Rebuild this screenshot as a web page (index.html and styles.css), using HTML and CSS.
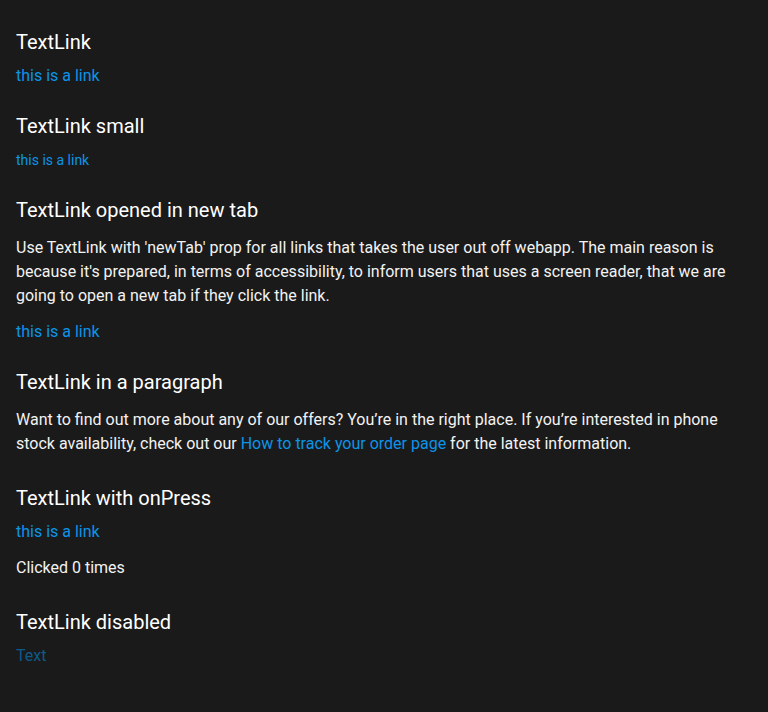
FILE: index.html
```html
<!DOCTYPE html>
<html>
<head>
<meta charset="utf-8">
<link rel="stylesheet" href="styles.css">
</head>
<body>
<main class="page">
  <section class="section">
    <h2 class="title">TextLink</h2>
    <div class="line"><a class="link" href="#">this is a link</a></div>
  </section>
  <section class="section">
    <h2 class="title">TextLink small</h2>
    <div class="line"><a class="link link-small" href="#">this is a link</a></div>
  </section>
  <section class="section">
    <h2 class="title">TextLink opened in new tab</h2>
    <p class="text">Use TextLink with 'newTab' prop for all links that takes the user out off webapp. The main reason is because it's prepared, in terms of accessibility, to inform users that uses a screen reader, that we are going to open a new tab if they click the link.</p>
    <div class="line"><a class="link" href="#">this is a link</a></div>
  </section>
  <section class="section">
    <h2 class="title">TextLink in a paragraph</h2>
    <p class="text">Want to find out more about any of our offers? You’re in the right place. If you’re interested in phone stock availability, check out our <a class="link" href="#">How to track your order page</a> for the latest information.</p>
  </section>
  <section class="section">
    <h2 class="title">TextLink with onPress</h2>
    <div class="line"><a class="link" href="#">this is a link</a></div>
    <p class="text">Clicked 0 times</p>
  </section>
  <section class="section">
    <h2 class="title">TextLink disabled</h2>
    <div class="line"><span class="link link-disabled">Text</span></div>
  </section>
</main>
</body>
</html>
```
FILE: styles.css
```css
html, body {
  margin: 0;
  padding: 0;
  background: #1a1a1a;
}
body {
  font-family: Roboto, "Noto Sans", sans-serif;
  color: #f2f2f2;
}
.page {
  padding: 28px 16px;
  display: flex;
  flex-direction: column;
  gap: 24px;
}
.section {
  display: flex;
  flex-direction: column;
  gap: 8px;
}
.title {
  margin: 0;
  font-size: 20px;
  line-height: 28px;
  font-weight: 400;
  color: #ffffff;
}
.text {
  margin: 4px 0;
  font-size: 16px;
  line-height: 24px;
  color: #f2f2f2;
}
.line {
  font-size: 16px;
  line-height: 24px;
}
.link {
  color: #0b94e8;
  text-decoration: none;
}
.link-small {
  font-size: 14px;
}
.link-disabled {
  color: #0c5a8c;
}
```
